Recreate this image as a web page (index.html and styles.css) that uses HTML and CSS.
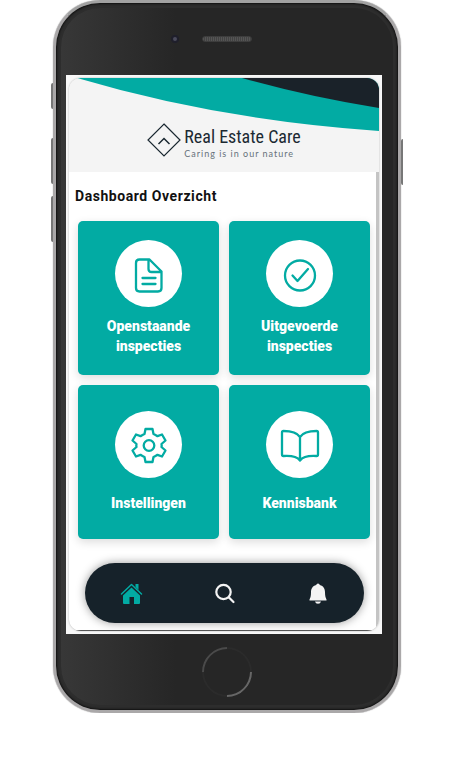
FILE: index.html
```html
<!DOCTYPE html>
<html lang="nl">
<head>
<meta charset="utf-8">
<meta name="viewport" content="width=device-width, initial-scale=1">
<title>Real Estate Care</title>
<link rel="stylesheet" href="styles.css">
</head>
<body>
<div class="phone">
  <span class="side-key mute"></span>
  <span class="side-key volume-up"></span>
  <span class="side-key volume-down"></span>
  <span class="side-key power"></span>
  <div class="bezel-top">
    <span class="camera"></span>
    <span class="speaker"></span>
  </div>
  <div class="screen">
    <div class="app">
      <header class="header">
        <svg class="swoosh" viewBox="0 0 310 94" preserveAspectRatio="none" aria-hidden="true">
          <path fill="#02aba3" d="M8 0Q150 42 310 53V0z"/>
          <path fill="#1a2229" d="M173 0Q240 19 310 30V0z"/>
        </svg>
        <a class="logo" href="#">
          <svg class="logo-mark" viewBox="0 0 34 34" fill="none" stroke="#1b2932" stroke-width="1.2" aria-hidden="true">
            <path d="M17 1L33 17L17 33L1 17z"/>
            <path stroke-width="1.5" d="M11.5 21L17 15.500L22.500 21"/>
          </svg>
          <span class="logo-text">
            <span class="logo-name">Real Estate Care</span>
            <span class="logo-tagline">Caring is in our nature</span>
          </span>
        </a>
      </header>
      <main class="content">
        <h1 class="title">Dashboard Overzicht</h1>
        <div class="cards">
          <a class="card" href="#">
            <span class="disc">
              <svg class="icon" viewBox="0 0 40 40" aria-hidden="true">
                <path d="M10.500 5.500H20.500L32.500 17.500V34Q32.500 37.500 29 37.500H10.500Q7 37.500 7 34V9Q7 5.500 10.500 5.500zM19.500 5.500V15Q19.500 18 22.500 18H32.500M13.500 24H26.500M13.500 30H26.500"/>
              </svg>
            </span>
            <span class="label">Openstaande inspecties</span>
          </a>
          <a class="card" href="#">
            <span class="disc">
              <svg class="icon" viewBox="0 0 40 40" aria-hidden="true">
                <circle cx="20" cy="21.500" r="15"/>
                <path d="M12.500 21.500L17.500 27L28 15"/>
              </svg>
            </span>
            <span class="label">Uitgevoerde inspecties</span>
          </a>
          <a class="card" href="#">
            <span class="disc">
              <svg class="icon" viewBox="0 0 40 40" aria-hidden="true">
                <path d="M16.500 5H23.500L24.500 10Q26.500 10.800 28.500 12.200L33 10.500L36.500 16.500L32.500 20Q32.900 21.500 32.500 23L36.500 26.500L33 32.500L28.500 30.800Q26.500 32.200 24.500 33L23.500 38H16.500L15.500 33Q13.500 32.200 11.500 30.800L7 32.500L3.500 26.500L7.500 23Q7.100 21.500 7.500 20L3.500 16.500L7 10.500L11.500 12.200Q13.500 10.800 15.500 10z"/>
                <circle cx="20" cy="21.500" r="5.300"/>
              </svg>
            </span>
            <span class="label">Instellingen</span>
          </a>
          <a class="card" href="#">
            <span class="disc">
              <svg class="icon" viewBox="0 0 40 40" aria-hidden="true">
                <path d="M20 13C17 8.500 11 7 3.500 7Q2 7 2 8.500V30.500Q2 32 3.500 32C11 31.500 17 32.500 20 36.500C23 32.500 29 31.500 36.500 32Q38 32 38 30.500V8.500Q38 7 36.500 7C29 7 23 8.500 20 13V36"/>
              </svg>
            </span>
            <span class="label">Kennisbank</span>
          </a>
        </div>
        <nav class="tabs">
          <a class="tab active" href="#" aria-label="Home">
            <svg viewBox="0 0 24 24" aria-hidden="true">
              <path fill="currentColor" d="M11.500 6.500L20 14.500V22Q20 23 19 23H14V16H9.500V23H4Q3 23 3 22V14.500zM15.500 5V3H18.500V9L15.500 6z"/>
              <path fill="none" stroke="currentColor" stroke-width="1.500" stroke-linecap="round" stroke-linejoin="round" d="M1.500 13L11.500 3.500L21.500 13"/>
            </svg>
          </a>
          <a class="tab" href="#" aria-label="Zoeken">
            <svg viewBox="0 0 24 24" fill="none" stroke="currentColor" stroke-width="2.200" stroke-linecap="round" aria-hidden="true">
              <circle cx="10.500" cy="11" r="7.200"/>
              <path d="M16 16.500L20.500 21"/>
            </svg>
          </a>
          <a class="tab" href="#" aria-label="Meldingen">
            <svg viewBox="0 0 24 24" fill="currentColor" aria-hidden="true">
              <path d="M12 2.500Q13.500 2.500 13.800 4C17.500 5 19 8 19 11C19 15 19.500 16.500 20.500 18.500V19.500H3.500V18.500C4.500 16.500 5 15 5 11C5 8 6.500 5 10.200 4Q10.500 2.500 12 2.500zM9 20.500H15Q14.500 22.800 12 22.800Q9.500 22.800 9 20.500z"/>
            </svg>
          </a>
        </nav>
      </main>
    </div>
  </div>
  <div class="bezel-bottom">
    <button class="home-key" type="button" aria-label="Thuisknop"></button>
  </div>
</div>
</body>
</html>
```
FILE: styles.css
```css
* {
  box-sizing: border-box;
}

body {
  margin: 0;
  background: #fff;
  font-family: Roboto, "Liberation Sans", sans-serif;
}

a {
  color: inherit;
  text-decoration: none;
}

.phone {
  position: relative;
  max-width: 420px;
  margin: 0 53px;
  padding: 0 16px 0 10px;
  border: 3px solid #aaa8a9;
  border-top-color: #a2a2a2;
  border-radius: 47px;
  background: linear-gradient(to right, #383838, #262626 35%);
  box-shadow: inset 0 0 2px 1px #111, inset 0 0 0 5px #2d2d2d, 0 0 1px #777;
}

.side-key {
  position: absolute;
  left: -5px;
  width: 2px;
  height: 46px;
  border-radius: 2px 0 0 2px;
  background: #777;
}

.mute {
  top: 80px;
  height: 26px;
}

.volume-up {
  top: 135px;
}

.volume-down {
  top: 193px;
}

.power {
  top: 136px;
  right: -5px;
  left: auto;
}

.bezel-top {
  display: grid;
  grid-template-columns: 1fr 50px 1fr;
  align-items: center;
  height: 72px;
  margin-right: -6px;
}

.camera {
  justify-self: end;
  width: 8px;
  height: 8px;
  margin-right: 23px;
  border: 2px solid #1f1f2b;
  border-radius: 50%;
  background: #4b4b5c;
}

.speaker {
  height: 6px;
  border: 1px solid #3d3d3d;
  border-radius: 3px;
  background: repeating-linear-gradient(to right, #555 0 1px, #434343 1px 2px);
}

.screen {
  padding: 3px;
  background: #f8f8f8;
}

.app {
  overflow: hidden;
  border-radius: 12px;
  background: #fff;
  box-shadow: 0 0 2px #aaa;
}

.header {
  position: relative;
  display: flex;
  justify-content: center;
  height: 94px;
  padding-top: 45px;
  background: #f4f4f4;
}

.swoosh {
  position: absolute;
  inset: 0;
  width: 100%;
  height: 100%;
}

.logo {
  position: relative;
  display: flex;
  gap: 3px;
  align-items: flex-start;
  height: 40px;
  color: #1b2932;
}

.logo-mark {
  width: 34px;
  height: 34px;
}

.logo-text {
  display: flex;
  flex-direction: column;
  padding-top: 3px;
  white-space: nowrap;
}

.logo-name {
  font-family: "Roboto Condensed", "Liberation Sans Narrow", Roboto, sans-serif;
  font-size: 18px;
  line-height: 22px;
}

.logo-tagline {
  color: #66717a;
  font-family: Lato, sans-serif;
  font-size: 9px;
  line-height: 11px;
  letter-spacing: 1px;
}

.content {
  padding: 16px 6px 7px;
  border-right: 3px solid #c4c4c4;
  border-bottom: 1px solid #555;
}

.title {
  margin: 0 0 17px;
  color: #111;
  font-size: 14px;
  font-weight: 700;
  line-height: 16px;
  letter-spacing: 0.04em;
}

.cards {
  display: grid;
  grid-template-columns: 1fr 1fr;
  grid-auto-rows: 154px;
  gap: 10px;
  margin: 0 0 24px 3px;
}

.card {
  display: flex;
  flex-direction: column;
  align-items: center;
  justify-content: space-evenly;
  padding: 10px 16px;
  border-radius: 5px;
  background: #02aba3;
  box-shadow: 0 3px 10px rgb(0 0 0 / 14%);
  color: #fff;
  text-align: center;
}

.disc {
  display: grid;
  place-items: center;
  width: 67px;
  height: 67px;
  border-radius: 50%;
  background: #fff;
}

.icon {
  width: 40px;
  height: 40px;
  fill: none;
  stroke: #02aba3;
  stroke-width: 2.3;
  stroke-linecap: round;
  stroke-linejoin: round;
}

.label {
  font-size: 14px;
  font-weight: 900;
  line-height: 20px;
}

.tabs {
  display: flex;
  align-items: center;
  justify-content: space-around;
  height: 60px;
  margin: 0 6px 0 10px;
  border-radius: 30px;
  background: #16222a;
  box-shadow: 0 0 10px rgb(0 0 0 / 40%);
  color: #f4f4f4;
}

.tab {
  display: flex;
}

.tab svg {
  width: 24px;
  height: 24px;
}

.active {
  color: #02aba3;
}

.bezel-bottom {
  display: grid;
  place-items: center;
  height: 76px;
  margin-right: -6px;
}

.home-key {
  width: 50px;
  height: 50px;
  padding: 0;
  border: 2px solid;
  border-color: #2b2b2b #666 #2b2b2b #4a4a4a;
  border-radius: 50%;
  background: #262626;
  rotate: 45deg;
}
```
